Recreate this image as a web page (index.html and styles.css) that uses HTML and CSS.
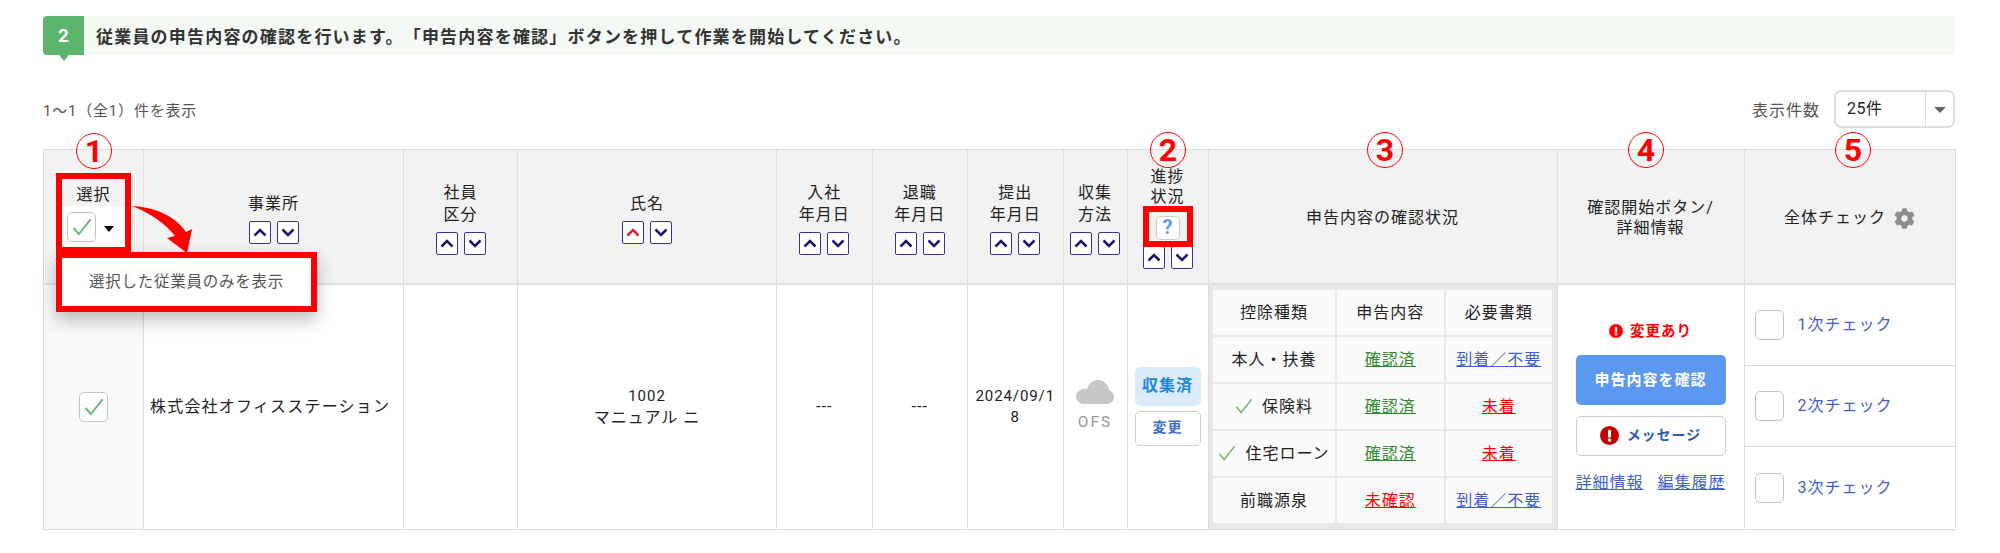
FILE: index.html
```html
<!DOCTYPE html>
<html lang="ja">

<head>
  <meta charset="UTF-8" />
  <title>申告内容の確認</title>
  <link rel="stylesheet" href="styles.css">
</head>

<body>
  <svg class="sprite" aria-hidden="true">
    <symbol id="chev-up" viewBox="0 0 14 9"><polyline points="1.5,7.5 7,2 12.5,7.5" fill="none" stroke="currentColor" stroke-width="2.5" /></symbol>
    <symbol id="chev-down" viewBox="0 0 14 9"><polyline points="1.5,1.5 7,7 12.5,1.5" fill="none" stroke="currentColor" stroke-width="2.5" /></symbol>
    <symbol id="tick" viewBox="0 0 22 20"><polyline points="1.5,11 7.5,18 20.5,1.5" fill="none" stroke="currentColor" stroke-width="2" /></symbol>
    <symbol id="alert" viewBox="0 0 20 20"><circle cx="10" cy="10" r="10" fill="currentColor" /><rect x="8.4" y="4" width="3.2" height="8" rx="1" fill="#fff" /><circle cx="10" cy="14.8" r="1.8" fill="#fff" /></symbol>
  </svg>

  <div class="page">
    <div class="step-bar">
      <div class="step-badge">2</div>
      <p class="step-text">従業員の申告内容の確認を行います。「申告内容を確認」ボタンを押して作業を開始してください。</p>
    </div>

    <div class="toolbar">
      <p class="count">1～1（全1）件を表示</p>
      <div class="per-page">
        <span class="per-page-label">表示件数</span>
        <div class="select">
          <span class="select-value">25件</span>
          <span class="select-arrow"></span>
        </div>
      </div>
    </div>

    <table class="list">
      <colgroup>
        <col class="col-select">
        <col class="col-office">
        <col class="col-type">
        <col class="col-name">
        <col class="col-date">
        <col class="col-date">
        <col class="col-date">
        <col class="col-method">
        <col class="col-progress">
        <col class="col-status">
        <col class="col-action">
        <col class="col-check">
      </colgroup>
      <thead>
        <tr>
          <th>
            <div class="head-label">選択</div>
            <div class="select-all">
              <span class="checkbox"><svg class="tick"><use href="#tick" /></svg></span>
              <span class="caret"></span>
            </div>
          </th>
          <th>
            <div class="head-label">事業所</div>
            <div class="sort"><span class="sort-btn"><svg><use href="#chev-up" /></svg></span><span class="sort-btn"><svg><use href="#chev-down" /></svg></span></div>
          </th>
          <th>
            <div class="head-label">社員<br>区分</div>
            <div class="sort"><span class="sort-btn"><svg><use href="#chev-up" /></svg></span><span class="sort-btn"><svg><use href="#chev-down" /></svg></span></div>
          </th>
          <th>
            <div class="head-label">氏名</div>
            <div class="sort"><span class="sort-btn active"><svg><use href="#chev-up" /></svg></span><span class="sort-btn"><svg><use href="#chev-down" /></svg></span></div>
          </th>
          <th>
            <div class="head-label">入社<br>年月日</div>
            <div class="sort"><span class="sort-btn"><svg><use href="#chev-up" /></svg></span><span class="sort-btn"><svg><use href="#chev-down" /></svg></span></div>
          </th>
          <th>
            <div class="head-label">退職<br>年月日</div>
            <div class="sort"><span class="sort-btn"><svg><use href="#chev-up" /></svg></span><span class="sort-btn"><svg><use href="#chev-down" /></svg></span></div>
          </th>
          <th>
            <div class="head-label">提出<br>年月日</div>
            <div class="sort"><span class="sort-btn"><svg><use href="#chev-up" /></svg></span><span class="sort-btn"><svg><use href="#chev-down" /></svg></span></div>
          </th>
          <th>
            <div class="head-label">収集<br>方法</div>
            <div class="sort"><span class="sort-btn"><svg><use href="#chev-up" /></svg></span><span class="sort-btn"><svg><use href="#chev-down" /></svg></span></div>
          </th>
          <th>
            <div class="head-label tight">進捗<br>状況</div>
            <div class="help">?</div>
            <div class="sort"><span class="sort-btn"><svg><use href="#chev-up" /></svg></span><span class="sort-btn"><svg><use href="#chev-down" /></svg></span></div>
          </th>
          <th>申告内容の確認状況</th>
          <th class="tight">確認開始ボタン/<br>詳細情報</th>
          <th>
            <div class="all-check">全体チェック
              <svg class="gear" viewBox="0 0 512 512"><path fill="currentColor" d="M487.4 315.7l-42.6-24.6c4.3-23.2 4.3-47 0-70.2l42.6-24.6c4.9-2.8 7.1-8.6 5.5-14-11.1-35.6-30-67.8-54.7-94.6-3.8-4.1-10-5.1-14.8-2.3L380.8 110c-17.9-15.4-38.5-27.3-60.8-35.1V25.8c0-5.6-3.9-10.5-9.4-11.7-36.7-8.2-74.3-7.8-109.2 0-5.5 1.2-9.4 6.1-9.4 11.7V75c-22.2 7.9-42.8 19.8-60.8 35.1L88.7 85.5c-4.9-2.8-11-1.9-14.8 2.3-24.7 26.7-43.6 58.9-54.7 94.6-1.7 5.4.6 11.2 5.5 14L67.3 221c-4.3 23.2-4.3 47 0 70.2l-42.6 24.6c-4.9 2.8-7.1 8.6-5.5 14 11.1 35.6 30 67.8 54.7 94.6 3.8 4.1 10 5.1 14.8 2.3l42.6-24.6c17.9 15.4 38.5 27.3 60.8 35.1v49.2c0 5.6 3.9 10.5 9.4 11.7 36.7 8.2 74.3 7.8 109.2 0 5.5-1.2 9.4-6.1 9.4-11.7v-49.2c22.2-7.9 42.8-19.8 60.8-35.1l42.6 24.6c4.9 2.8 11 1.9 14.8-2.3 24.7-26.7 43.6-58.9 54.7-94.6 1.5-5.5-.7-11.3-5.6-14.1zM256 336c-44.1 0-80-35.9-80-80s35.9-80 80-80 80 35.9 80 80-35.9 80-80 80z" /></svg>
            </div>
          </th>
        </tr>
      </thead>
      <tbody>
        <tr>
          <td class="cell-select"><span class="checkbox"><svg class="tick"><use href="#tick" /></svg></span></td>
          <td class="cell-office">株式会社オフィスステーション</td>
          <td></td>
          <td><span class="emp-no">1002</span><br>マニュアル ニ</td>
          <td>---</td>
          <td>---</td>
          <td class="cell-date">2024/09/18</td>
          <td class="cell-method">
            <svg class="cloud" viewBox="0 0 38 24"><path fill="currentColor" d="M8 24C3.5 24 0 20.8 0 16.5 0 12.6 3 9.6 6.8 9.2 8 8.6 9.5 8.6 11 9 12.3 3.8 16.7 0 22 0c6 0 10.6 4.6 11 10.3 2.9 1 5 3.5 5 6.7 0 4-3.2 7-7.2 7Z" /></svg>
            <div>OFS</div>
          </td>
          <td class="cell-progress">
            <div class="badge-done">収集済</div>
            <div class="btn-change">変更</div>
          </td>
          <td class="cell-status">
            <table class="status">
              <tr>
                <td class="status-kind">控除種類</td>
                <td>申告内容</td>
                <td>必要書類</td>
              </tr>
              <tr>
                <td class="status-kind">本人・扶養</td>
                <td><a class="ok" href="#">確認済</a></td>
                <td><a class="link" href="#">到着／不要</a></td>
              </tr>
              <tr>
                <td class="status-kind"><svg class="mini-tick"><use href="#tick" /></svg>保険料</td>
                <td><a class="ok" href="#">確認済</a></td>
                <td><a class="ng" href="#">未着</a></td>
              </tr>
              <tr>
                <td class="status-kind"><svg class="mini-tick"><use href="#tick" /></svg>住宅ローン</td>
                <td><a class="ok" href="#">確認済</a></td>
                <td><a class="ng" href="#">未着</a></td>
              </tr>
              <tr>
                <td class="status-kind">前職源泉</td>
                <td><a class="ng" href="#">未確認</a></td>
                <td><a class="link" href="#">到着／不要</a></td>
              </tr>
            </table>
          </td>
          <td>
            <div class="action">
              <div class="changed"><svg><use href="#alert" /></svg>変更あり</div>
              <div class="btn-confirm">申告内容を確認</div>
              <div class="btn-message"><svg><use href="#alert" /></svg>メッセージ</div>
              <div class="action-links"><a class="link" href="#">詳細情報</a><a class="link" href="#">編集履歴</a></div>
            </div>
          </td>
          <td class="cell-checks">
            <div class="checks">
              <div class="check-row"><span class="checkbox"></span><a class="check-link" href="#">1次チェック</a></div>
              <div class="check-row"><span class="checkbox"></span><a class="check-link" href="#">2次チェック</a></div>
              <div class="check-row"><span class="checkbox"></span><a class="check-link" href="#">3次チェック</a></div>
            </div>
          </td>
        </tr>
      </tbody>
    </table>

    <!-- red annotations over the table -->
    <div class="num num-1">1</div>
    <div class="num num-2">2</div>
    <div class="num num-3">3</div>
    <div class="num num-4">4</div>
    <div class="num num-5">5</div>
    <div class="mark mark-select"></div>
    <div class="mark mark-help"></div>
    <div class="popup">選択した従業員のみを表示</div>
    <svg class="arrow" viewBox="0 0 64 50"><path fill="#f00" d="M0 2C23 3 43 12 54 28L60 25 55 49 35 34 43 32C33 19 18 9 0 2Z" /></svg>
  </div>
</body>

</html>
```

FILE: styles.css
```css
body {
  margin: 0;
  font-family: Roboto, "Noto Sans CJK JP", sans-serif;
  font-size: 16px;
  letter-spacing: 1px;
  text-spacing-trim: space-all;
  color: #333;
  background-color: white;
}

p {
  margin: 0;
}

.sprite {
  display: none;
}

.page {
  position: relative;
  padding: 16px 45px 0 43px;
}

/* Step banner */
.step-bar {
  display: flex;
  align-items: center;
  height: 39px;
  background-color: #f3f9f3;
  border-radius: 4px;
}

.step-badge {
  position: relative;
  display: flex;
  align-items: center;
  justify-content: center;
  width: 41px;
  height: 39px;
  background-color: #5cb56d;
  border-radius: 4px 0 0 4px;
  color: white;
  font-size: 19px;
  font-weight: bold;
  letter-spacing: 0;
}

.step-badge::after {
  content: "";
  position: absolute;
  left: 16px;
  top: 39px;
  border-left: 5px solid transparent;
  border-right: 5px solid transparent;
  border-top: 6px solid #5cb56d;
}

.step-text {
  margin-left: 12px;
  font-size: 17px;
  font-weight: bold;
  letter-spacing: 1.2px;
}

/* Count and page size */
.toolbar {
  display: flex;
  align-items: center;
  justify-content: space-between;
  margin-top: 35px;
  height: 38px;
}

.count {
  color: #555;
  font-size: 15px;
  letter-spacing: 0.8px;
}

.per-page {
  display: flex;
  align-items: center;
  gap: 14px;
}

.per-page-label {
  color: #555;
}

.select {
  display: flex;
  width: 121px;
  height: 38px;
  box-sizing: border-box;
  border: 2px solid #ddd;
  border-radius: 7px;
}

.select-value {
  width: 90px;
  padding-left: 11px;
  box-sizing: border-box;
  line-height: 34px;
  border-right: 1px solid #ddd;
  letter-spacing: 0.5px;
  color: #222;
}

.select-arrow {
  width: 0;
  height: 0;
  margin: 15px 0 0 8px;
  border-left: 6px solid transparent;
  border-right: 6px solid transparent;
  border-top: 6px solid #666;
}

/* Main table */
.list {
  width: 1912px;
  margin-top: 21px;
  table-layout: fixed;
  border-collapse: collapse;
}

.col-select { width: 100px; }
.col-office { width: 260px; }
.col-type { width: 114px; }
.col-name { width: 259px; }
.col-date { width: 95.5px; }
.col-method { width: 64px; }
.col-progress { width: 81px; }
.col-status { width: 349px; }
.col-action { width: 187px; }
.col-check { width: 211px; }

.list > thead > tr > th,
.list > tbody > tr > td {
  border: 1px solid #dcdcdc;
  padding: 0;
  text-align: center;
  vertical-align: middle;
}

.list > thead > tr > th {
  height: 134px;
  padding-top: 4px;
  box-sizing: border-box;
  background-color: #f2f2f2;
  font-weight: normal;
  line-height: 22px;
  color: #222;
  border-bottom: 2px solid #e0e0e0;
}

.list > tbody > tr > td {
  height: 244px;
  line-height: 21px;
  color: #222;
}

.list > thead > tr > th.tight,
.tight {
  line-height: 20px;
}

/* Sort buttons */
.sort {
  display: flex;
  justify-content: center;
  gap: 6px;
  margin-top: 6px;
}

.sort-btn {
  display: flex;
  align-items: center;
  justify-content: center;
  width: 22px;
  height: 23px;
  box-sizing: border-box;
  background-color: white;
  border: 1.5px solid #35358f;
  border-radius: 2px;
  color: #15156b;
}

.sort-btn svg {
  width: 14px;
  height: 9px;
}

.sort-btn.active {
  color: #e0202a;
}

/* Checkboxes */
.checkbox {
  display: inline-flex;
  align-items: center;
  justify-content: center;
  width: 29px;
  height: 30px;
  box-sizing: border-box;
  background-color: white;
  border: 1.5px solid #c4c4c4;
  border-radius: 5px;
  vertical-align: middle;
}

.tick {
  width: 20px;
  height: 18px;
  color: #5cb56d;
}

.select-all {
  display: flex;
  align-items: flex-start;
  gap: 8px;
  width: 63px;
  height: 47px;
  margin: 0 auto;
  padding: 6px 0 0 5px;
  box-sizing: border-box;
  background-color: white;
}

.caret {
  width: 0;
  height: 0;
  margin-top: 14px;
  border-left: 5px solid transparent;
  border-right: 5px solid transparent;
  border-top: 6px solid black;
}

.help {
  width: 24px;
  height: 24px;
  margin: 9px auto 0;
  box-sizing: border-box;
  background-color: white;
  border: 1.5px solid #ccc;
  border-radius: 4px;
  color: #5b9bf0;
  font-size: 20px;
  font-weight: bold;
  line-height: 21px;
  letter-spacing: 0;
}

.all-check {
  display: flex;
  align-items: center;
  justify-content: center;
  gap: 8px;
}

.gear {
  width: 21px;
  height: 21px;
  color: #8c8c8c;
}

/* Body cells */
.list > tbody > tr > td.cell-select {
  background-color: #f9f9f9;
}

.list > tbody > tr > td.cell-office {
  padding-left: 6px;
  text-align: left;
  letter-spacing: 1.2px;
}

.emp-no {
  font-size: 15px;
}

.list > tbody > tr > td.cell-date {
  padding: 0 6px;
  font-size: 15px;
  letter-spacing: 0.9px;
  word-break: break-all;
}

.cloud {
  display: block;
  width: 38px;
  height: 24px;
  margin: 0 auto 8px;
  color: #c8c8c8;
}

.list > tbody > tr > td.cell-method {
  color: #999;
  font-size: 15.5px;
  letter-spacing: 2px;
}

.badge-done {
  width: 66px;
  height: 39px;
  margin: 0 auto;
  background-color: #dcebfb;
  border-radius: 5px;
  color: #1e88d8;
  font-weight: bold;
  line-height: 37px;
}

.btn-change {
  width: 66px;
  height: 35px;
  margin: 5px auto 0;
  box-sizing: border-box;
  border: 1.5px solid #ccc;
  border-radius: 5px;
  color: #3b6fc9;
  font-size: 14px;
  font-weight: bold;
  line-height: 31px;
}

/* Nested status table */
.list > tbody > tr > td.cell-status {
  background-color: #e8e8e8;
}

.status {
  width: 343px;
  margin: 0 auto;
  table-layout: fixed;
  border-collapse: separate;
  border-spacing: 2px;
}

.status td {
  height: 45px;
  padding: 0;
  background-color: #fafafa;
  text-align: center;
  vertical-align: middle;
}

.status td.status-kind {
  width: 122px;
  white-space: nowrap;
}

.mini-tick {
  width: 18px;
  height: 16px;
  margin-right: 9px;
  color: #6cbb77;
  vertical-align: -2px;
}

.ok {
  color: #2e8b2e;
}

.ng {
  color: #f00;
}

.link {
  color: #3f5fc9;
}

/* Action column */
.action {
  display: flex;
  flex-direction: column;
  align-items: center;
}

.changed {
  display: flex;
  align-items: center;
  gap: 7px;
  margin-bottom: 13px;
  color: #f00;
  font-size: 14.5px;
  font-weight: bold;
}

.changed svg {
  width: 14px;
  height: 14px;
}

.btn-confirm {
  width: 150px;
  height: 50px;
  background-color: #5b98ef;
  border-radius: 5px;
  color: white;
  font-size: 15px;
  font-weight: bold;
  line-height: 50px;
}

.btn-message {
  display: flex;
  align-items: center;
  justify-content: center;
  gap: 8px;
  width: 150px;
  height: 40px;
  margin-top: 11px;
  box-sizing: border-box;
  border: 1.5px solid #ccc;
  border-radius: 5px;
  color: #2a5ab8;
  font-size: 14px;
  font-weight: bold;
}

.btn-message svg {
  width: 19px;
  height: 19px;
  color: #c40000;
}

.action-links {
  display: flex;
  justify-content: space-between;
  width: 150px;
  margin-top: 16px;
}

/* Check column */
.list > tbody > tr > td.cell-checks {
  text-align: left;
}

.checks {
  display: grid;
  grid-template-rows: repeat(3, 1fr);
  height: 244px;
}

.check-row {
  display: flex;
  align-items: center;
  gap: 14px;
  padding-left: 10px;
  border-bottom: 1px solid #d8d8d8;
}

.check-row:last-child {
  border-bottom: none;
}

.check-link {
  color: #3f5fc9;
  text-decoration: none;
}

/* Red annotations */
.num {
  position: absolute;
  display: flex;
  align-items: center;
  justify-content: center;
  width: 36px;
  height: 36px;
  box-sizing: border-box;
  border: 1.5px solid #f00;
  border-radius: 50%;
  color: #f00;
  font-size: 32px;
  font-weight: bold;
  letter-spacing: 0;
}

.num-1 { left: 76px; top: 133px; }
.num-2 { left: 1150px; top: 132px; }
.num-3 { left: 1367px; top: 132px; }
.num-4 { left: 1628px; top: 132px; }
.num-5 { left: 1835px; top: 132px; }

.mark {
  position: absolute;
  box-sizing: border-box;
  border: 6px solid #f00;
}

.mark-select {
  left: 56px;
  top: 173px;
  width: 75px;
  height: 80px;
}

.mark-help {
  left: 1143px;
  top: 206px;
  width: 50px;
  height: 41px;
}

.popup {
  position: absolute;
  left: 56px;
  top: 252px;
  width: 261px;
  height: 60px;
  box-sizing: border-box;
  border: 6px solid #f00;
  background-color: white;
  box-shadow: 0 8px 16px rgba(0, 0, 0, 0.25);
  color: #555;
  line-height: 48px;
  text-align: center;
  font-size: 15.5px;
  letter-spacing: 0.75px;
}

.arrow {
  position: absolute;
  left: 132px;
  top: 204px;
  width: 64px;
  height: 50px;
}
```
